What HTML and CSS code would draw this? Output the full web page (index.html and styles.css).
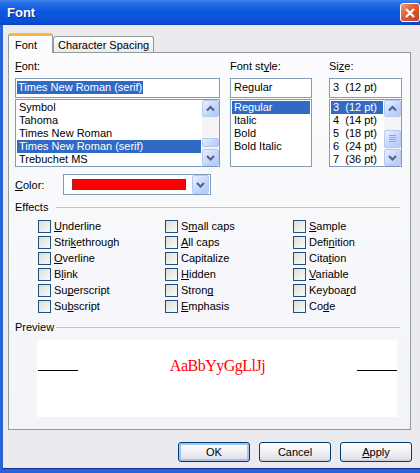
FILE: index.html
```html
<!DOCTYPE html>
<html lang="en">
  <head>
    <meta charset="UTF-8" />
    <title>Font</title>
    <link rel="stylesheet" href="styles.css">
  </head>
  <body>
    <!-- Title bar -->
    <div class="titlebar">
      <span class="title">Font</span>
      <span class="close-btn">
        <svg width="12" height="12" viewBox="0 0 12 12"><path d="M2 2 L10 10 M10 2 L2 10" stroke="#fff" stroke-width="2.2" fill="none" /></svg>
      </span>
    </div>

    <div class="client">
      <!-- Tabs -->
      <div class="tabs">
        <div class="tab active">Font</div>
        <div class="tab">Character Spacing</div>
      </div>

      <div class="panel">
        <div class="pickers">
          <!-- Font name -->
          <div class="picker picker-font">
            <div class="caption"><u>F</u>ont:</div>
            <div class="edit"><span class="edit-sel">Times New Roman (serif)</span></div>
            <div class="list">
              <ul class="items">
                <li>Symbol</li>
                <li>Tahoma</li>
                <li>Times New Roman</li>
                <li class="selected">Times New Roman (serif)</li>
                <li>Trebuchet MS</li>
              </ul>
              <div class="scrollbar">
                <div class="sb-btn"><svg width="15" height="15" viewBox="0 0 15 15"><path d="M4 9.5 L7.5 6 L11 9.5" stroke="#4d6185" stroke-width="2" fill="none" /></svg></div>
                <div class="sb-track"><div class="sb-thumb thumb-font"></div></div>
                <div class="sb-btn"><svg width="15" height="15" viewBox="0 0 15 15"><path d="M4 6 L7.5 9.5 L11 6" stroke="#4d6185" stroke-width="2" fill="none" /></svg></div>
              </div>
            </div>
          </div>

          <!-- Font style -->
          <div class="picker picker-style">
            <div class="caption">Font st<u>y</u>le:</div>
            <div class="edit">Regular</div>
            <div class="list">
              <ul class="items">
                <li class="selected">Regular</li>
                <li>Italic</li>
                <li>Bold</li>
                <li>Bold Italic</li>
              </ul>
            </div>
          </div>

          <!-- Size -->
          <div class="picker picker-size">
            <div class="caption">Si<u>z</u>e:</div>
            <div class="edit">3  (12 pt)</div>
            <div class="list">
              <ul class="items">
                <li class="selected">3  (12 pt)</li>
                <li>4  (14 pt)</li>
                <li>5  (18 pt)</li>
                <li>6  (24 pt)</li>
                <li>7  (36 pt)</li>
              </ul>
              <div class="scrollbar">
                <div class="sb-btn"><svg width="15" height="15" viewBox="0 0 15 15"><path d="M4 9.5 L7.5 6 L11 9.5" stroke="#4d6185" stroke-width="2" fill="none" /></svg></div>
                <div class="sb-track">
                  <div class="sb-thumb thumb-size">
                    <svg width="8" height="8" viewBox="0 0 8 8"><path d="M0 0.5 H7 M0 2.5 H7 M0 4.5 H7 M0 6.5 H7" stroke="#8da4d6" stroke-width="1" /></svg>
                  </div>
                </div>
                <div class="sb-btn"><svg width="15" height="15" viewBox="0 0 15 15"><path d="M4 6 L7.5 9.5 L11 6" stroke="#4d6185" stroke-width="2" fill="none" /></svg></div>
              </div>
            </div>
          </div>
        </div>

        <!-- Color -->
        <div class="color-row">
          <span class="color-caption"><u>C</u>olor:</span>
          <div class="combo">
            <span class="swatch"></span>
            <span class="combo-btn"><svg width="15" height="15" viewBox="0 0 15 15"><path d="M4 6 L7.5 9.5 L11 6" stroke="#4d6185" stroke-width="2" fill="none" /></svg></span>
          </div>
        </div>

        <!-- Effects -->
        <div class="group-title"><span class="group-name">Effects</span><span class="rule"></span></div>
        <div class="effects">
          <div class="check"><span class="box"></span><span><u>U</u>nderline</span></div>
          <div class="check"><span class="box"></span><span>Stri<u>k</u>ethrough</span></div>
          <div class="check"><span class="box"></span><span><u>O</u>verline</span></div>
          <div class="check"><span class="box"></span><span>B<u>l</u>ink</span></div>
          <div class="check"><span class="box"></span><span>Su<u>p</u>erscript</span></div>
          <div class="check"><span class="box"></span><span>Su<u>b</u>script</span></div>
          <div class="check"><span class="box"></span><span>S<u>m</u>all caps</span></div>
          <div class="check"><span class="box"></span><span><u>A</u>ll caps</span></div>
          <div class="check"><span class="box"></span><span>Capitalize</span></div>
          <div class="check"><span class="box"></span><span><u>H</u>idden</span></div>
          <div class="check"><span class="box"></span><span>Stron<u>g</u></span></div>
          <div class="check"><span class="box"></span><span><u>E</u>mphasis</span></div>
          <div class="check"><span class="box"></span><span><u>S</u>ample</span></div>
          <div class="check"><span class="box"></span><span>Defi<u>n</u>ition</span></div>
          <div class="check"><span class="box"></span><span>Cita<u>t</u>ion</span></div>
          <div class="check"><span class="box"></span><span><u>V</u>ariable</span></div>
          <div class="check"><span class="box"></span><span>Keyboa<u>r</u>d</span></div>
          <div class="check"><span class="box"></span><span>Co<u>d</u>e</span></div>
        </div>

        <!-- Preview -->
        <div class="group-title preview-title"><span class="group-name">Preview</span><span class="rule"></span></div>
        <div class="preview">
          <span class="baseline"></span>
          <span class="sample">AaBbYyGgLlJj</span>
          <span class="baseline"></span>
        </div>
      </div>

      <!-- Dialog buttons -->
      <div class="buttons">
        <button class="btn default">OK</button>
        <button class="btn">Cancel</button>
        <button class="btn"><u>A</u>pply</button>
      </div>
    </div>
  </body>
</html>
```

FILE: styles.css
```css
html,
body {
  margin: 0;
  padding: 0;
  width: 420px;
  height: 473px;
  overflow: hidden;
}

body {
  font-family: "Liberation Sans", Arial, sans-serif;
  font-size: 11px;
  color: #000;
  background: #ebeaee;
}

u {
  text-decoration-skip-ink: none;
}

/* Window chrome */
.titlebar {
  width: 424px;
  height: 25px;
  box-sizing: border-box;
  padding: 0 4px 0 7px;
  display: flex;
  align-items: center;
  justify-content: space-between;
  background: linear-gradient(#3d84ee 0%, #2a70e6 12%, #0d57de 45%, #0a50d6 85%, #0842c4 100%);
}

.title {
  color: #fff;
  font-weight: bold;
  font-size: 13px;
  text-shadow: 1px 1px 0 #0b2a8f;
}

.close-btn {
  width: 20px;
  height: 19px;
  box-sizing: border-box;
  border: 1px solid #fff;
  border-radius: 3px;
  background: linear-gradient(135deg, #f09a80, #e05a36 45%, #c8401c);
  display: flex;
  align-items: center;
  justify-content: center;
}

.client {
  width: 424px;
  height: 448px;
  box-sizing: border-box;
  padding: 8px 9px 0 5px;
  border-left: 3px solid #2a62d8;
  border-right: 3px solid #2a62d8;
  border-bottom: 4px solid #2a62d8;
  box-shadow: inset 0 -1px 0 #0c2f9c;
  background: #ebeaee;
}

/* Tabs */
.tabs {
  display: flex;
  align-items: flex-end;
  height: 19px;
}

.tab {
  height: 16px;
  box-sizing: border-box;
  padding: 0 4px;
  display: flex;
  align-items: center;
  border: 1px solid #919b9c;
  border-bottom: none;
  border-radius: 3px 3px 0 0;
  background: linear-gradient(#ffffff, #ecebea);
}

.tab.active {
  position: relative;
  z-index: 1;
  height: 20px;
  margin-bottom: -1px;
  padding: 0 15px 0 6px;
  border-top: 3px solid #f7b83a;
  background: #fcfcfe;
}

.panel {
  width: 403px;
  height: 378px;
  box-sizing: border-box;
  padding: 7px 8px 0 6px;
  border: 1px solid #919b9c;
  background: linear-gradient(#fcfcfe, #f3f4f8);
}

/* Font / style / size pickers */
.pickers {
  display: flex;
}

.picker-font {
  width: 205px;
  margin-right: 10px;
}

.picker-style {
  width: 82px;
  margin-right: 17px;
}

.picker-size {
  width: 73px;
}

.caption {
  line-height: 13px;
  margin-bottom: 5px;
}

.edit {
  height: 20px;
  box-sizing: border-box;
  padding: 2px 3px 0;
  line-height: 13px;
  border: 1px solid #7f9db9;
  background: #fff;
  white-space: pre;
}

.edit-sel {
  margin-left: -2px;
  padding: 0 1px;
  background: #316ac5;
  color: #fff;
  display: inline-block;
}

.list {
  height: 68px;
  margin-top: 1px;
  box-sizing: border-box;
  border: 1px solid #7f9db9;
  background: #fff;
  display: flex;
}

.items {
  flex: 1;
  list-style: none;
  margin: 0;
  padding: 1px;
}

.items li {
  line-height: 13px;
  padding: 0 2px;
  white-space: pre;
}

.items li.selected {
  background: #316ac5;
  color: #fff;
}

/* XP scrollbar */
.scrollbar {
  width: 17px;
  display: flex;
  flex-direction: column;
}

.sb-btn,
.sb-thumb,
.combo-btn {
  box-sizing: border-box;
  border: 1px solid #b4c8f2;
  border-radius: 2px;
  background: linear-gradient(135deg, #eaf0fe, #c3d5fb 60%, #b2c8f6);
  display: flex;
  align-items: center;
  justify-content: center;
}

.sb-btn {
  height: 17px;
}

.sb-track {
  flex: 1;
  background: #f4f4f7;
  display: flex;
  flex-direction: column;
}

.thumb-font {
  margin-top: 21px;
  height: 9px;
}

.thumb-size {
  margin-top: 13px;
  height: 18px;
}

/* Color */
.color-row {
  margin-top: 7px;
  display: flex;
  align-items: center;
}

.color-caption {
  width: 48px;
}

.combo {
  width: 148px;
  height: 21px;
  box-sizing: border-box;
  padding: 0 1px;
  border: 1px solid #7f9db9;
  background: #fff;
  display: flex;
  align-items: center;
}

.swatch {
  width: 114px;
  height: 11px;
  margin-left: 7px;
  box-sizing: border-box;
  border: 1px solid #a02020;
  background: #ff0000;
}

.combo-btn {
  margin-left: auto;
  width: 17px;
  height: 19px;
}

/* Group headers */
.group-title {
  margin-top: 6px;
  height: 13px;
  line-height: 13px;
  display: flex;
  align-items: center;
}

.group-name {
  width: 41px;
}

.rule {
  flex: 1;
  height: 1px;
  margin-right: 2px;
  background: #c4c4c8;
}

.preview-title {
  margin-top: 7px;
}

/* Effects checkboxes */
.effects {
  margin-top: 4px;
  padding-left: 23px;
  display: grid;
  grid-template-columns: 127px 128px 1fr;
  grid-template-rows: repeat(6, 16px);
  grid-auto-flow: column;
}

.check {
  display: flex;
  align-items: center;
}

.box {
  width: 13px;
  height: 13px;
  box-sizing: border-box;
  margin-right: 3px;
  border: 1px solid #1c5180;
  background: linear-gradient(135deg, #dcdcd7, #fbfbf9);
}

/* Preview */
.preview {
  width: 360px;
  height: 77px;
  margin: 6px 0 0 22px;
  background: #fff;
  display: flex;
  align-items: flex-start;
}

.baseline {
  width: 40px;
  height: 1px;
  margin-top: 30px;
  background: #000;
}

.baseline:first-child {
  margin-left: 1px;
}

.sample {
  flex: 1;
  margin-top: 17px;
  text-align: center;
  font-family: "Liberation Serif", "Times New Roman", serif;
  font-size: 16px;
  line-height: 18px;
  letter-spacing: -0.5px;
  color: #ff0000;
}

/* Dialog buttons */
.buttons {
  margin-top: 12px;
  display: flex;
  justify-content: flex-end;
  gap: 9px;
}

.btn {
  width: 72px;
  height: 20px;
  padding: 0;
  font-family: inherit;
  font-size: 11px;
  color: #000;
  border: 1px solid #003c74;
  border-radius: 3px;
  background: linear-gradient(#ffffff 0%, #f4f4f7 40%, #e2e2ea 85%, #c9cbd6 100%);
}

.btn.default {
  box-shadow: inset 0 0 0 2px #a9c3ef;
}
```
